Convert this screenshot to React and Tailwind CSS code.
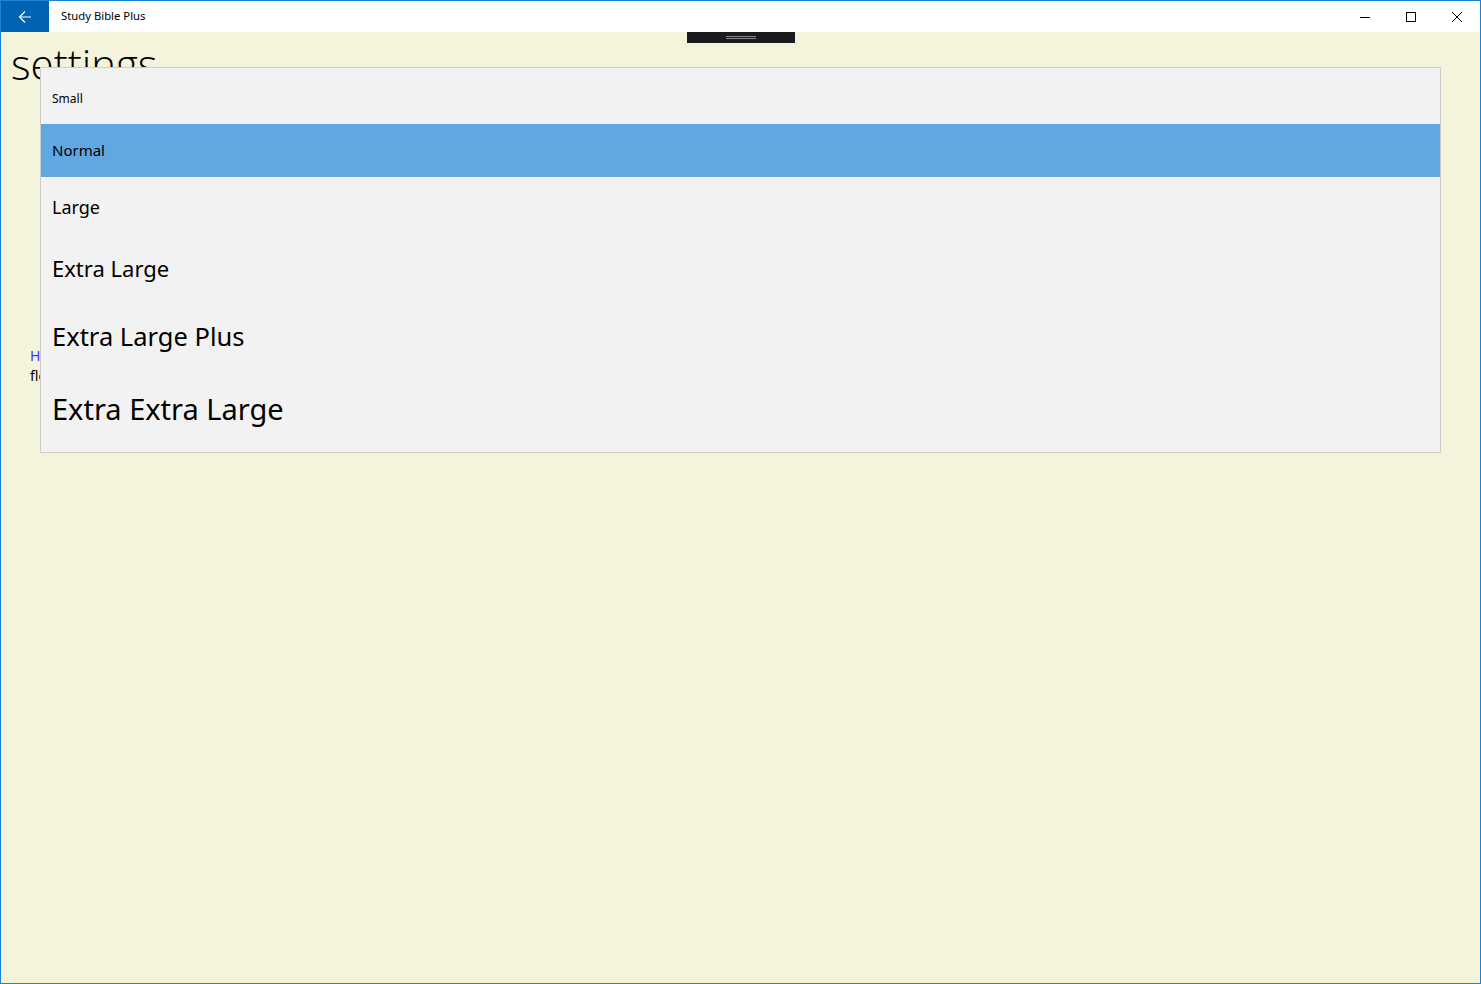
import React from "react";

const items = [
  { label: "Small", h: "h-[56px] pt-[6px]", size: "text-[12px]" },
  { label: "Normal", h: "h-[53px]", size: "text-[15px]", active: true },
  { label: "Large", h: "h-[60px]", size: "text-[18px]" },
  { label: "Extra Large", h: "h-[64px] pb-[2px]", size: "text-[22px]" },
  { label: "Extra Large Plus", h: "h-[70px]", size: "text-[25.5px]" },
  { label: "Extra Extra Large", h: "h-[81px] pb-[6px]", size: "text-[29px]" },
];

export default function App() {
  return (
    <div
      className="relative w-[1481px] h-[984px] border border-[#1883d7] bg-[#f4f4dc] overflow-hidden flex flex-col"
      style={{ fontFamily: '"Noto Sans", "Open Sans", sans-serif' }}
    >
      {/* title bar */}
      <div className="h-[31px] bg-white flex items-center shrink-0">
        <div className="w-[48px] h-full bg-[#0063b1] flex items-center justify-center">
          <svg width="14" height="14" viewBox="0 0 14 14" fill="none" stroke="white" strokeWidth="1.2">
            <path d="M13 7H1.5M7 1.5L1.5 7L7 12.5" />
          </svg>
        </div>
        <div className="ml-[12px] text-[11.3px] text-black">Study Bible Plus</div>
        <div className="ml-auto flex h-full">
          <div className="w-[46px] h-full flex items-center justify-center">
            <svg width="10" height="10" viewBox="0 0 10 10"><path d="M0 5.5H10" stroke="black" strokeWidth="1" /></svg>
          </div>
          <div className="w-[46px] h-full flex items-center justify-center">
            <svg width="10" height="10" viewBox="0 0 10 10"><rect x="0.5" y="0.5" width="9" height="9" fill="none" stroke="black" strokeWidth="1" /></svg>
          </div>
          <div className="w-[46px] h-full flex items-center justify-center">
            <svg width="10" height="10" viewBox="0 0 10 10"><path d="M0 0L10 10M10 0L0 10" stroke="black" strokeWidth="1" /></svg>
          </div>
        </div>
      </div>

      {/* drag handle */}
      <div className="absolute left-[686px] top-[31px] w-[108px] h-[11px] bg-[#1b1b1b] flex flex-col items-center justify-center gap-[1px]">
        <div className="w-[30px] h-[1px] bg-[#8a8a8a]" />
        <div className="w-[30px] h-[1px] bg-[#8a8a8a]" />
      </div>

      {/* page content */}
      <div className="flex flex-col">
        <div
          className="ml-[10px] mt-[6px] text-[42px] leading-[52px] font-light text-black"
          style={{ fontFamily: '"Open Sans", "Noto Sans", sans-serif' }}
        >
          settings
        </div>
        <div className="ml-[29px] mt-[256px] flex flex-col text-[14px] leading-[20px]">
          <span className="text-[#3333ff]">Help</span>
          <span className="text-black">flow direction</span>
        </div>
      </div>

      {/* dropdown overlay */}
      <div className="absolute left-[39px] top-[66px] w-[1401px] border border-[#cccccc] bg-[#f2f2f2] flex flex-col">
        {items.map((it) => (
          <div
            key={it.label}
            className={`${it.h} flex items-center pl-[11px] text-black ${it.size} ${
              it.active ? "bg-[#61a8e2]" : ""
            }`}
          >
            {it.label}
          </div>
        ))}
      </div>
    </div>
  );
}
